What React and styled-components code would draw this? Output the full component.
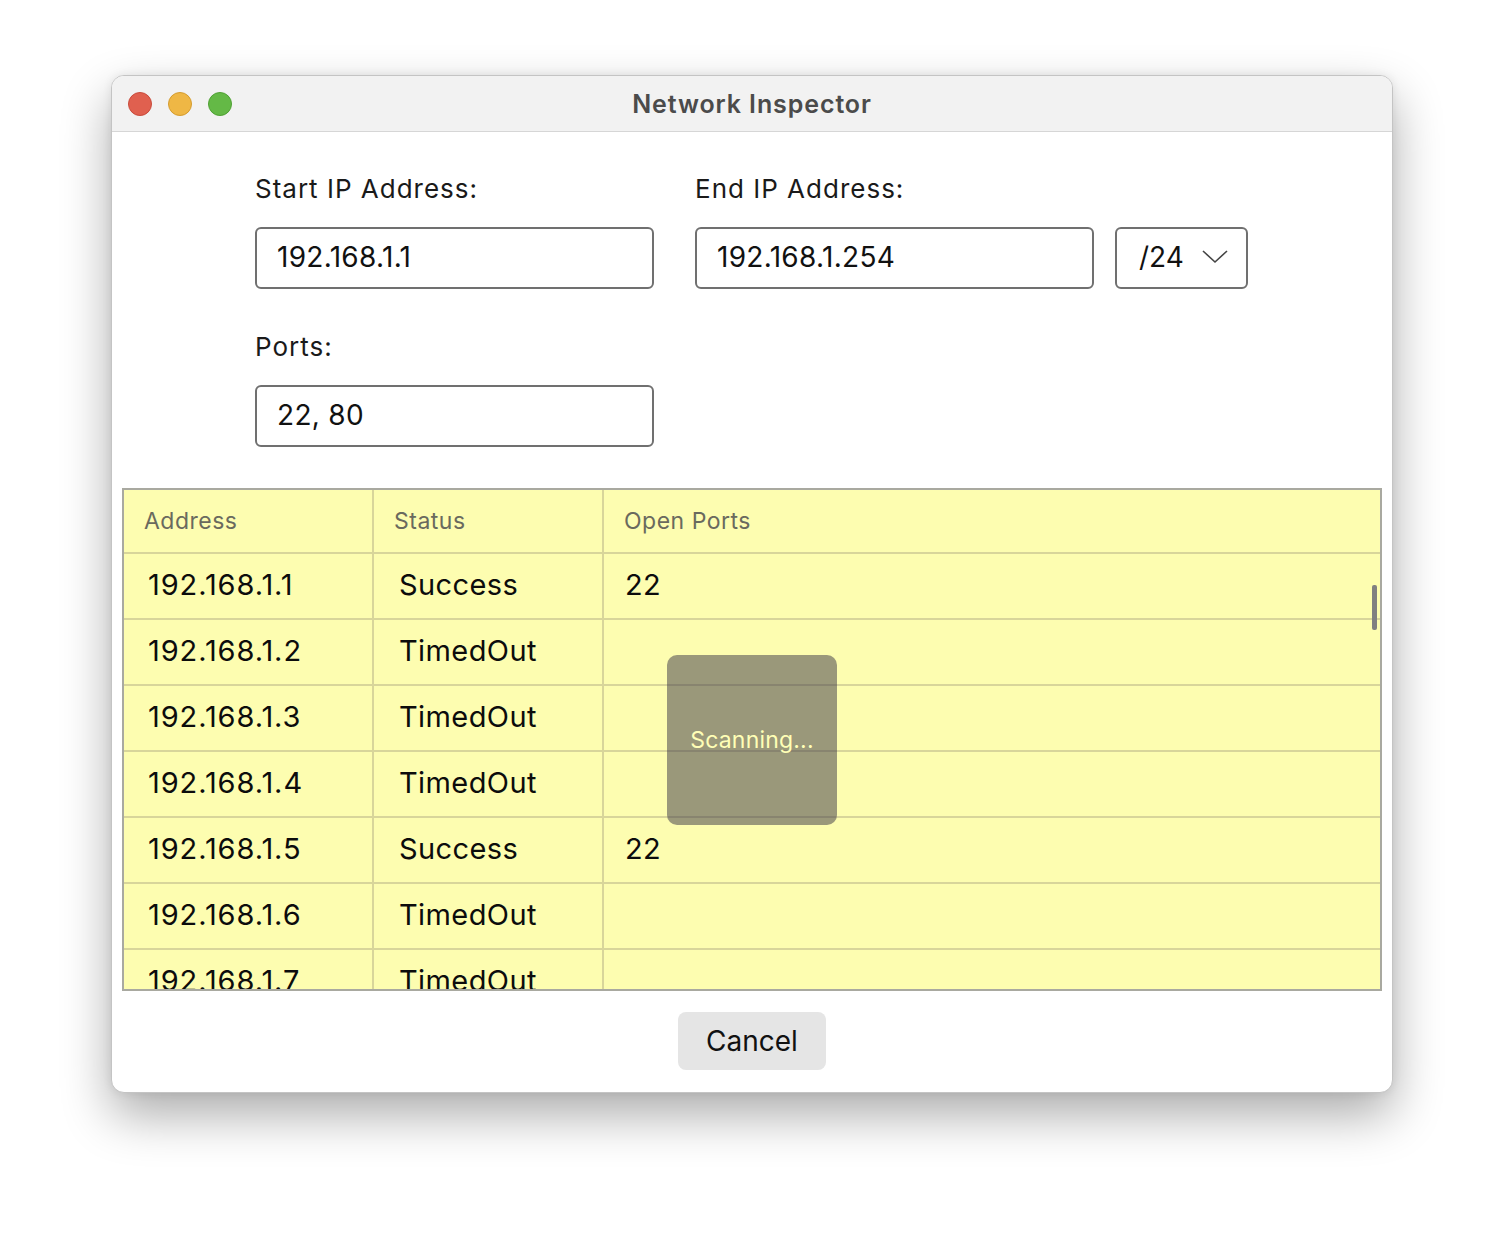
import styled, { createGlobalStyle } from "styled-components";

const rows = [
  { address: "192.168.1.1", status: "Success", ports: "22" },
  { address: "192.168.1.2", status: "TimedOut", ports: "" },
  { address: "192.168.1.3", status: "TimedOut", ports: "" },
  { address: "192.168.1.4", status: "TimedOut", ports: "" },
  { address: "192.168.1.5", status: "Success", ports: "22" },
  { address: "192.168.1.6", status: "TimedOut", ports: "" },
  { address: "192.168.1.7", status: "TimedOut", ports: "" },
];

export default function App() {
  return (
    <>
      <Global />
      <Page>
        <Window>
          <TitleBar>
            <Lights>
              <Light color="#e0604f" edge="#c94b3c" />
              <Light color="#efb745" edge="#d59c2f" />
              <Light color="#64b946" edge="#4fa134" />
            </Lights>
            <Title>Network Inspector</Title>
          </TitleBar>
          <Body>
            <Form>
              <Field>
                <Label>Start IP Address:</Label>
                <Input defaultValue="192.168.1.1" />
              </Field>
              <Field>
                <Label>End IP Address:</Label>
                <InputRow>
                  <Input defaultValue="192.168.1.254" />
                  <Select>
                    /24
                    <svg width="26" height="14" viewBox="0 0 26 14">
                      <path d="M1 1 L13 12 L25 1" fill="none" stroke="#444" strokeWidth="1.6" />
                    </svg>
                  </Select>
                </InputRow>
              </Field>
              <Field>
                <Label>Ports:</Label>
                <Input defaultValue="22, 80" />
              </Field>
            </Form>
            <Table>
              <HeaderRow>
                <HeadCell>Address</HeadCell>
                <HeadCell>Status</HeadCell>
                <HeadCell last>Open Ports</HeadCell>
              </HeaderRow>
              {rows.map((r) => (
                <Row key={r.address}>
                  <Cell pad={24} wide>{r.address}</Cell>
                  <Cell pad={25}>{r.status}</Cell>
                  <Cell pad={21} last>{r.ports}</Cell>
                </Row>
              ))}
              <Thumb />
              <Overlay>Scanning...</Overlay>
            </Table>
            <Footer>
              <Button>Cancel</Button>
            </Footer>
          </Body>
        </Window>
      </Page>
    </>
  );
}

const Global = createGlobalStyle`
  body {
    margin: 0;
    background: #ffffff;
    font-family: Inter, "Noto Sans", sans-serif;
  }
`;
const Page = styled.div`
  display: flex;
  justify-content: center;
  padding-top: 75px;
  height: 1240px;
  box-sizing: border-box;
`;
const Window = styled.div`
  width: 1282px;
  height: 1018px;
  box-sizing: border-box;
  border-radius: 13px;
  border: 1px solid #c4c4c4;
  background: #ffffff;
  box-shadow: 0 22px 50px rgba(0, 0, 0, 0.33), 0 0 10px rgba(0, 0, 0, 0.08);
  overflow: hidden;
  display: flex;
  flex-direction: column;
`;
const TitleBar = styled.div`
  position: relative;
  height: 55px;
  flex: none;
  background: #f2f2f2;
  border-bottom: 1px solid #d6d6d6;
  display: flex;
  align-items: center;
  justify-content: center;
`;
const Lights = styled.div`
  position: absolute;
  left: 16px;
  top: 16px;
  display: flex;
  gap: 16px;
`;
const Light = styled.span`
  width: 24px;
  height: 24px;
  border-radius: 50%;
  box-sizing: border-box;
  background: ${(p) => p.color};
  border: 1px solid ${(p) => p.edge};
`;
const Title = styled.div`
  font-size: 25px;
  font-weight: 600;
  letter-spacing: 0.9px;
  color: #4b4b4b;
`;
const Body = styled.div`
  flex: 1;
  display: flex;
  flex-direction: column;
  padding: 0 10px;
`;
const Form = styled.div`
  display: grid;
  grid-template-columns: 399px auto;
  column-gap: 41px;
  row-gap: 42px;
  padding: 41px 0 41px 133px;
`;
const Field = styled.div`
  display: flex;
  flex-direction: column;
  gap: 22px;
`;
const Label = styled.div`
  font-size: 26px;
  line-height: 32px;
  letter-spacing: 1px;
  color: #1a1a1a;
`;
const InputRow = styled.div`
  display: flex;
  gap: 21px;
`;
const Input = styled.input`
  width: 399px;
  height: 62px;
  box-sizing: border-box;
  border: 2px solid #707070;
  border-radius: 6px;
  padding: 0 20px 2px;
  font-family: Inter, "Noto Sans", sans-serif;
  font-size: 28px;
  letter-spacing: 0.3px;
  color: #111;
  outline: none;
`;
const Select = styled.div`
  width: 133px;
  height: 62px;
  box-sizing: border-box;
  border: 2px solid #707070;
  border-radius: 6px;
  padding: 0 18px 2px 22px;
  display: flex;
  align-items: center;
  justify-content: space-between;
  font-size: 28px;
  color: #111;
`;
const Table = styled.div`
  position: relative;
  height: 503px;
  box-sizing: border-box;
  border: 2px solid #a9a9a0;
  background: #fdfdb0;
  overflow: hidden;
`;
const HeaderRow = styled.div`
  display: grid;
  grid-template-columns: 250px 230px 1fr;
  height: 64px;
  border-bottom: 2px solid #d8d59a;
  box-sizing: border-box;
`;
const HeadCell = styled.div`
  display: flex;
  align-items: center;
  padding-left: 20px;
  font-size: 23px;
  letter-spacing: 0.5px;
  color: #6a6a5e;
  border-right: ${(p) => (p.last ? "none" : "2px solid #d8d59a")};
`;
const Row = styled.div`
  display: grid;
  grid-template-columns: 250px 230px 1fr;
  height: 66px;
  border-bottom: 2px solid #d8d59a;
  box-sizing: border-box;
`;
const Cell = styled.div`
  display: flex;
  align-items: center;
  padding-left: ${(p) => p.pad}px;
  padding-bottom: 3px;
  font-size: 29px;
  letter-spacing: ${(p) => (p.wide ? "0.9px" : "0.4px")};
  color: #0c0c0c;
  border-right: ${(p) => (p.last ? "none" : "2px solid #d8d59a")};
`;
const Thumb = styled.div`
  position: absolute;
  right: 3px;
  top: 95px;
  width: 5px;
  height: 45px;
  border-radius: 2px;
  background: #808080;
`;
const Overlay = styled.div`
  position: absolute;
  left: 50%;
  top: 50%;
  transform: translate(-50%, -50%);
  width: 170px;
  height: 170px;
  border-radius: 10px;
  background: rgba(55, 51, 68, 0.5);
  display: flex;
  align-items: center;
  justify-content: center;
  font-size: 23px;
  letter-spacing: 0.2px;
  color: #ffffb6;
`;
const Footer = styled.div`
  display: flex;
  justify-content: center;
  padding-top: 21px;
`;
const Button = styled.button`
  width: 148px;
  height: 58px;
  border: none;
  border-radius: 8px;
  background: #e5e5e5;
  font-family: Inter, "Noto Sans", sans-serif;
  font-size: 28px;
  color: #111;
`;
